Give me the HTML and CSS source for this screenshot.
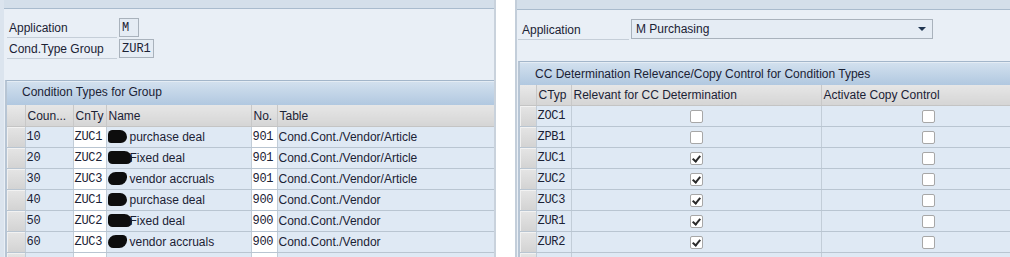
FILE: index.html
```html
<!DOCTYPE html>
<html lang="en">
<head>
    <meta charset="UTF-8">
    <title>Condition Types</title>
    <link rel="stylesheet" href="styles.css">
</head>
<body>
<div class="screen">

    <div class="panel panel-left">
        <div class="topbar"></div>
        <div class="form">
            <div class="field">
                <span class="label">Application</span>
                <span class="input w-m">M</span>
            </div>
            <div class="field">
                <span class="label">Cond.Type Group</span>
                <span class="input w-zur">ZUR1</span>
            </div>
        </div>

        <div class="grid">
            <div class="grid-title tall">Condition Types for Group</div>
            <table>
                <colgroup>
                    <col class="c-sel"><col class="c-count"><col class="c-cnty"><col class="c-name"><col class="c-no"><col class="c-table">
                </colgroup>
                <tr class="head">
                    <th class="sel"></th><th>Coun...</th><th>CnTy</th><th>Name</th><th>No.</th><th>Table</th>
                </tr>
                <tr>
                    <td class="sel"><span class="btn"></span></td><td class="mono">10</td><td class="mono white">ZUC1</td>
                    <td><span class="blot b1"></span>purchase deal</td><td class="mono white">901</td><td>Cond.Cont./Vendor/Article</td>
                </tr>
                <tr>
                    <td class="sel"><span class="btn"></span></td><td class="mono">20</td><td class="mono white">ZUC2</td>
                    <td><span class="blot b2"></span>Fixed deal</td><td class="mono white">901</td><td>Cond.Cont./Vendor/Article</td>
                </tr>
                <tr>
                    <td class="sel"><span class="btn"></span></td><td class="mono">30</td><td class="mono white">ZUC3</td>
                    <td><span class="blot b3"></span>vendor accruals</td><td class="mono white">901</td><td>Cond.Cont./Vendor/Article</td>
                </tr>
                <tr>
                    <td class="sel"><span class="btn"></span></td><td class="mono">40</td><td class="mono white">ZUC1</td>
                    <td><span class="blot b1"></span>purchase deal</td><td class="mono white">900</td><td>Cond.Cont./Vendor</td>
                </tr>
                <tr>
                    <td class="sel"><span class="btn"></span></td><td class="mono">50</td><td class="mono white">ZUC2</td>
                    <td><span class="blot b2"></span>Fixed deal</td><td class="mono white">900</td><td>Cond.Cont./Vendor</td>
                </tr>
                <tr>
                    <td class="sel"><span class="btn"></span></td><td class="mono">60</td><td class="mono white">ZUC3</td>
                    <td><span class="blot b3"></span>vendor accruals</td><td class="mono white">900</td><td>Cond.Cont./Vendor</td>
                </tr>
                <tr>
                    <td class="sel"><span class="btn"></span></td><td></td><td class="white"></td><td></td><td class="white"></td><td></td>
                </tr>
            </table>
        </div>
    </div>

    <div class="gap"></div>

    <div class="panel panel-right">
        <div class="topbar tall"></div>
        <div class="form form-right">
            <div class="field">
                <span class="label wide">Application</span>
                <span class="dropdown">M Purchasing<span class="arrow"></span></span>
            </div>
        </div>

        <div class="grid">
            <div class="grid-title">CC Determination Relevance/Copy Control for Condition Types</div>
            <table>
                <colgroup>
                    <col class="c-sel2"><col class="c-ctyp"><col class="c-rel"><col class="c-copy">
                </colgroup>
                <tr class="head">
                    <th class="sel"></th><th>CTyp</th><th>Relevant for CC Determination</th><th>Activate Copy Control</th>
                </tr>
                <tr>
                    <td class="sel"><span class="btn"></span></td><td class="mono">ZOC1</td>
                    <td class="center"><span class="check"></span></td><td class="center"><span class="check"></span></td>
                </tr>
                <tr>
                    <td class="sel"><span class="btn"></span></td><td class="mono">ZPB1</td>
                    <td class="center"><span class="check"></span></td><td class="center"><span class="check"></span></td>
                </tr>
                <tr>
                    <td class="sel"><span class="btn"></span></td><td class="mono">ZUC1</td>
                    <td class="center"><span class="check on"></span></td><td class="center"><span class="check"></span></td>
                </tr>
                <tr>
                    <td class="sel"><span class="btn"></span></td><td class="mono">ZUC2</td>
                    <td class="center"><span class="check on"></span></td><td class="center"><span class="check"></span></td>
                </tr>
                <tr>
                    <td class="sel"><span class="btn"></span></td><td class="mono">ZUC3</td>
                    <td class="center"><span class="check on"></span></td><td class="center"><span class="check"></span></td>
                </tr>
                <tr>
                    <td class="sel"><span class="btn"></span></td><td class="mono">ZUR1</td>
                    <td class="center"><span class="check on"></span></td><td class="center"><span class="check"></span></td>
                </tr>
                <tr>
                    <td class="sel"><span class="btn"></span></td><td class="mono">ZUR2</td>
                    <td class="center"><span class="check on"></span></td><td class="center"><span class="check"></span></td>
                </tr>
                <tr>
                    <td class="sel"><span class="btn"></span></td><td></td><td></td><td></td>
                </tr>
            </table>
        </div>
    </div>

</div>
</body>
</html>
```

FILE: styles.css
```css
body{
    margin: 0;
    background-color: #ffffff;
    font-family: "Liberation Sans", Arial, sans-serif;
    font-size: 12px;
    color: #1b2235;
}

.screen{
    display: flex;
    width: 1010px;
    height: 257px;
    overflow: hidden;
}

.panel{
    display: flex;
    flex-direction: column;
    background-color: #e9eff6;
    overflow: hidden;
}

.panel-left{
    width: 490px;
    border-left: 4px solid #dbe4ee;
    border-right: 2px solid #c9d2dc;
}

.gap{
    width: 19px;
    background-color: #ffffff;
}

.panel-right{
    flex: 1;
    border-left: 2px solid #c3ceda;
}

.topbar{
    flex-shrink: 0;
    height: 8px;
    background-color: #d4dfea;
    border-bottom: 1px solid #a9bbcd;
    margin-left: -4px;
}

.topbar.tall{
    height: 9px;
    margin-left: 0;
}

.form{
    flex-shrink: 0;
    padding: 8px 0 0 3px;
    height: 63px;
}

.form-right{
    padding: 9px 0 0 1px;
    height: 42px;
}

.field{
    display: flex;
    align-items: center;
    height: 21px;
}

.label{
    width: 110px;
    height: 20px;
    line-height: 20px;
    padding-left: 2px;
    border-bottom: 1px solid #c5ced8;
    box-sizing: border-box;
}

.label.wide{
    width: 111px;
    padding-left: 4px;
}

.input{
    height: 19px;
    line-height: 18px;
    margin-left: 2px;
    padding-left: 2px;
    box-sizing: border-box;
    border: 1px solid #a9b2bc;
    background-color: #e5ecf4;
    font-family: "Liberation Mono", "Courier New", monospace;
    font-size: 12px;
}

.w-m{ width: 20px; }
.w-zur{ width: 35px; }

.dropdown{
    position: relative;
    width: 302px;
    height: 20px;
    line-height: 18px;
    margin-left: 2px;
    margin-top: -2px;
    padding-left: 4px;
    box-sizing: border-box;
    border: 1px solid #a9b2bc;
    background-color: #e5ecf4;
}

.arrow{
    position: absolute;
    right: 6px;
    top: 7px;
    border-left: 4px solid transparent;
    border-right: 4px solid transparent;
    border-top: 4px solid #1f3550;
}

.grid{
    margin-left: 1px;
    border-top: 1px solid #a3b6ca;
    border-left: 2px solid #b7c5d4;
    flex: 1;
}

.grid-title{
    height: 22px;
    line-height: 22px;
    padding-left: 15px;
    border-top: 1px solid #e4ecf4;
    background: linear-gradient(#d2e0ee, #b1c8e0);
}

.grid-title.tall{
    height: 23px;
    line-height: 21px;
}

table{
    border-collapse: collapse;
    table-layout: fixed;
}

.panel-left table{ width: 488px; }
.panel-right table{ width: 516px; }

.c-sel{ width: 18px; }
.c-count{ width: 48px; }
.c-cnty{ width: 33px; }
.c-name{ width: 145px; }
.c-no{ width: 26px; }
.c-table{ width: 218px; }
.c-sel2{ width: 16px; }
.c-ctyp{ width: 35px; }
.c-rel{ width: 250px; }
.c-copy{ width: 215px; }

th, td{
    height: 20px;
    padding: 0 0 0 1px;
    border-right: 1px solid #c2cdd8;
    border-bottom: 1px solid #b9c5d1;
    white-space: nowrap;
    overflow: hidden;
    text-align: left;
    font-weight: normal;
    background-color: #dfe9f4;
}

.head th{
    height: 21px;
    padding-left: 2px;
    background: linear-gradient(#e6e6e6, #d5d5d5);
    border-bottom: 1px solid #c4c4c4;
    border-right: 1px solid #c8c8c8;
}

.panel-right .head th{
    height: 20px;
}

.head th.sel{
    background: linear-gradient(#e9e9e9, #d6d6d6);
}

td.sel{
    padding: 0;
    background-color: #dfe9f4;
}

.btn{
    display: block;
    height: 20px;
    background: linear-gradient(#e4e4e4, #d3d3d3);
    border-top: 1px solid #f2f2f2;
    border-left: 1px solid #f0f0f0;
    box-sizing: border-box;
}

.mono{
    font-family: "Liberation Mono", "Courier New", monospace;
    font-size: 12px;
    letter-spacing: -0.3px;
}

.white{
    background-color: #ffffff;
}

.center{
    text-align: center;
    padding: 0;
}

.check{
    display: inline-block;
    position: relative;
    width: 13px;
    height: 13px;
    box-sizing: border-box;
    border: 1px solid #a7a7a7;
    border-radius: 2px;
    background-color: #ffffff;
    vertical-align: middle;
}

.check.on::after{
    content: "";
    position: absolute;
    left: 3px;
    top: 1px;
    width: 3px;
    height: 6px;
    border-right: 2px solid #2b2b2b;
    border-bottom: 2px solid #2b2b2b;
    transform: rotate(40deg);
}

.blot{
    display: inline-block;
    height: 13px;
    margin-right: 3px;
    vertical-align: -2px;
    background-color: #0d0d0d;
}

.b1{ width: 19px; border-radius: 6px 9px 8px 4px; }
.b2{ width: 24px; margin-right: -2px; border-radius: 5px 10px 7px 6px; }
.b3{ width: 19px; border-radius: 9px 5px 9px 6px; }
```
